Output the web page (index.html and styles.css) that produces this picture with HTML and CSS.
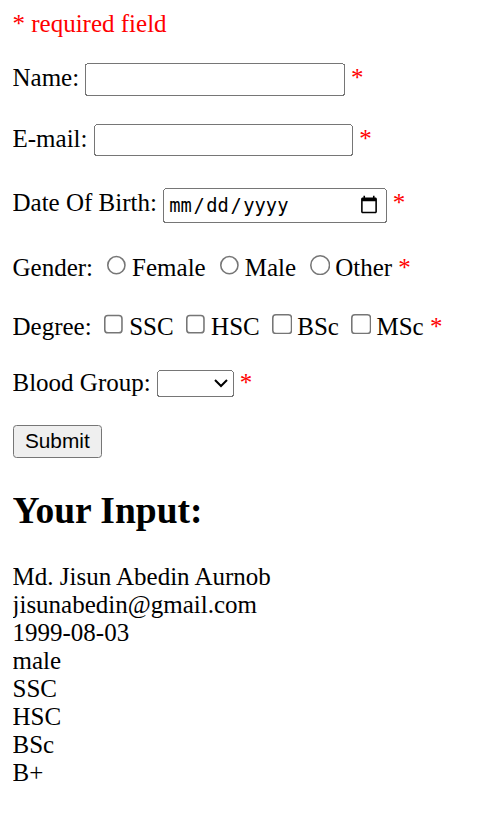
FILE: index.html
```html
<!DOCTYPE html>
<html>
<head>
<meta charset="utf-8">
<title>Form</title>
<link rel="stylesheet" href="styles.css">
</head>
<body>
<p class="note"><span class="error">* required field</span></p>
<form class="form">
  Name: <input type="text" name="name" class="text-input">
  <span class="error">*</span>
  <br><br>
  E-mail: <input type="text" name="email" class="text-input">
  <span class="error">*</span>
  <br><br>
  Date Of Birth: <input type="date" name="dob" class="date-input">
  <span class="error">*</span>
  <br><br>
  Gender:
  <input type="radio" name="gender" value="female" class="choice">Female
  <input type="radio" name="gender" value="male" class="choice">Male
  <input type="radio" name="gender" value="other" class="choice">Other
  <span class="error">*</span>
  <br><br>
  Degree:
  <input type="checkbox" name="degree" value="SSC" class="choice">SSC
  <input type="checkbox" name="degree" value="HSC" class="choice">HSC
  <input type="checkbox" name="degree" value="BSc" class="choice">BSc
  <input type="checkbox" name="degree" value="MSc" class="choice">MSc
  <span class="error">*</span>
  <br><br>
  Blood Group:
  <select name="blood" class="select-input">
    <option value=""></option>
    <option>A+</option>
    <option>B+</option>
    <option>O+</option>
    <option>AB+</option>
  </select>
  <span class="error">*</span>
  <br><br>
  <input type="submit" name="submit" value="Submit" class="submit-btn">
</form>
<h2 class="result-title">Your Input:</h2>
<div class="result">
Md. Jisun Abedin Aurnob<br>
jisunabedin@gmail.com<br>
1999-08-03<br>
male<br>
SSC<br>
HSC<br>
BSc<br>
B+<br>
</div>
</body>
</html>
```

FILE: styles.css
```css
html {
  zoom: 1.5625;
}
body {
  margin: 6.3px 8px 8px;
  font-family: "Liberation Serif", "Times New Roman", serif;
  color: #000;
  background: #fff;
}
.note {
  margin-top: 0;
}
.error {
  color: #ff0000;
}
.text-input,
.select-input,
.submit-btn {
  font-family: "Liberation Sans", Arial, sans-serif;
}
.text-input {
  box-sizing: border-box;
  width: 166px;
  height: 21px;
}
.date-input {
  box-sizing: border-box;
  width: 143px;
  height: 22.5px;
  margin-top: 2px;
  font-family: "DejaVu Sans Mono", "Liberation Mono", monospace;
  font-size: 12px;
}
.date-input::-webkit-datetime-edit {
  padding-left: 0;
}
.date-input::-webkit-datetime-edit-text {
  padding: 0;
}
.date-input::-webkit-calendar-picker-indicator {
  width: 12.8px;
  height: 12.8px;
  padding: 0;
  margin-right: 3px;
}
.select-input {
  box-sizing: border-box;
  width: 49px;
  height: 17.5px;
}
```
